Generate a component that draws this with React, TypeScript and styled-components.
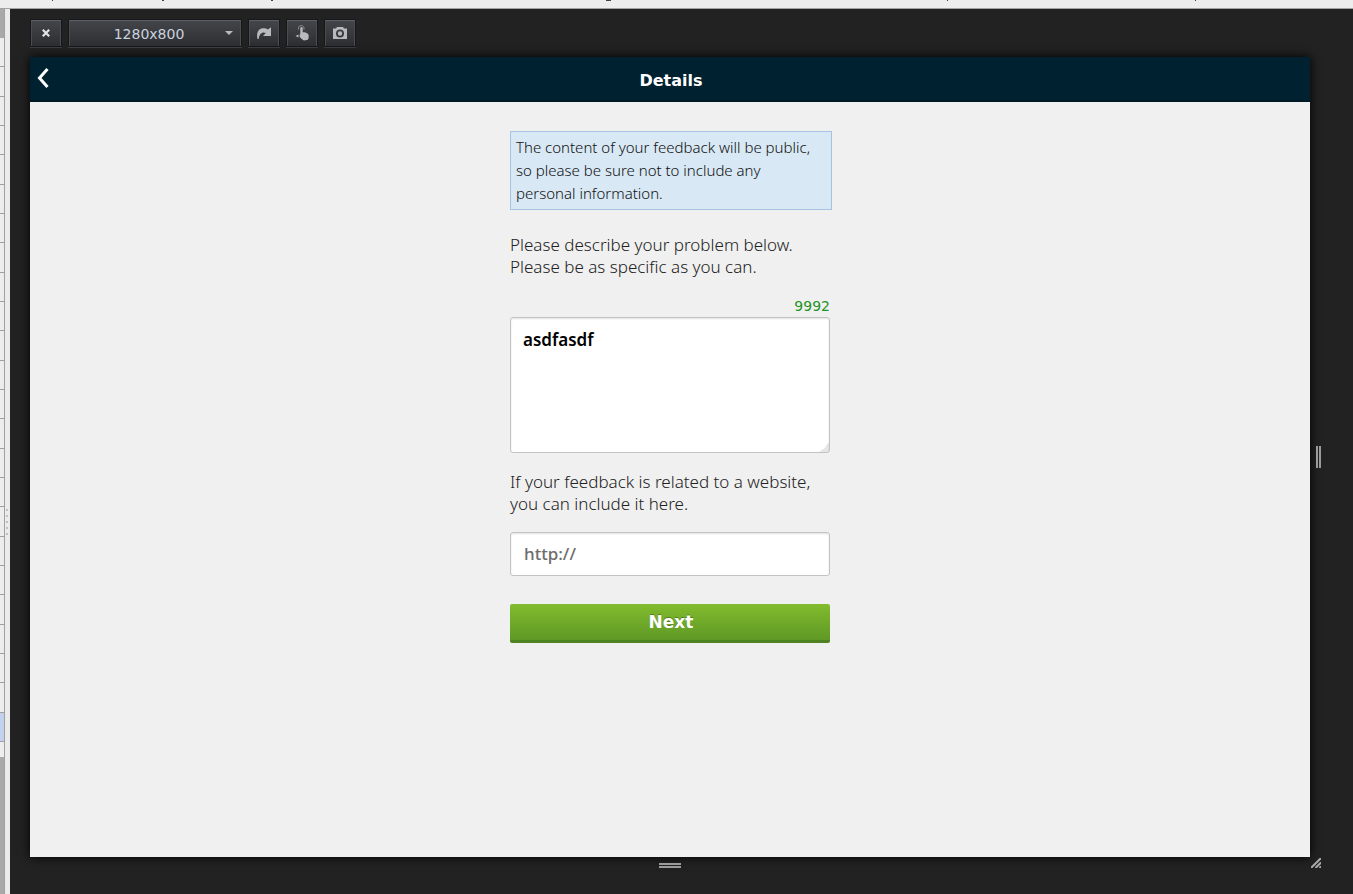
import React, { useState } from 'react';
import styled, { createGlobalStyle } from 'styled-components';

const uiFont = '"DejaVu Sans", sans-serif';
const bodyFont = '"Noto Sans", "Open Sans", sans-serif';
const LIMIT = 10000;

const GlobalStyle = createGlobalStyle`
  *, *::before, *::after { box-sizing: border-box; }
  body { margin: 0; background: #222; font-family: ${uiFont}; }
  button, input, textarea, select { font: inherit; margin: 0; }
`;

const Screen = styled.div`
  display: flex;
  flex-direction: column;
  min-height: 100vh;
`;

const BrowserEdge = styled.div`
  height: 9px;
  flex: none;
  overflow: hidden;
  background: #ededed;
  border-bottom: 1px solid #a3a3a3;
  svg { display: block; }
`;

const Workspace = styled.div`
  flex: 1;
  display: flex;
`;

const SidePanel = styled.div`
  width: 5px;
  flex: none;
  display: flex;
  flex-direction: column;
  background: #a9a9a9;
  border-right: 1px solid #a0a0a0;
  padding-top: 29px;
`;

const SideRows = styled.div`
  height: 704px;
  display: flex;
  flex-direction: column;
`;

const SideRow = styled.div<{ $selected: boolean }>`
  flex: 1;
  background: ${p => (p.$selected ? '#c2d2ee' : '#ededed')};
  border-bottom: 1px solid #a0a0a0;
`;

const SideTail = styled.div`
  height: 15px;
  background: #ededed;
`;

const Splitter = styled.div`
  width: 5px;
  flex: none;
  display: flex;
  flex-direction: column;
  align-items: flex-start;
  justify-content: center;
  gap: 4px;
  padding: 140px 0 0 1px;
  background: #ebebeb;
`;

const SplitterDot = styled.span`
  width: 2px;
  height: 2px;
  background: #c0c0c0;
`;

const Stage = styled.main`
  flex: 1;
  min-width: 0;
  display: flex;
  flex-direction: column;
  padding: 10px 0 0 20px;
  background: #222;
`;

const Toolbar = styled.div`
  display: flex;
  gap: 6px;
  padding-bottom: 10px;
`;

const ToolButton = styled.button`
  width: 32px;
  height: 28px;
  display: flex;
  align-items: center;
  justify-content: center;
  padding: 0;
  color: #b8babd;
  border: 1px solid #161719;
  border-radius: 0;
  background: linear-gradient(#44464b, #2c2e31);
  box-shadow: inset 0 1px 0 #5c5f68, inset 1px 0 0 #4b4d54, inset -1px 0 0 #4b4d54, 0 1px 0 #3c3d3f;
`;

const SizePicker = styled.label`
  position: relative;
  display: flex;
  svg {
    position: absolute;
    right: 9px;
    top: 12px;
    pointer-events: none;
  }
`;

const SizeSelect = styled.select`
  appearance: none;
  width: 174px;
  height: 28px;
  padding: 2px 12px 0 0;
  font-size: 14px;
  text-align: center;
  text-align-last: center;
  color: #c9d3df;
  border: 1px solid #161719;
  border-radius: 0;
  background: linear-gradient(#44464b, #2c2e31);
  box-shadow: inset 0 1px 0 #5c5f68, inset 1px 0 0 #4b4d54, inset -1px 0 0 #4b4d54, 0 1px 0 #3c3d3f;
`;

const StageGrid = styled.div`
  flex: 1;
  display: grid;
  grid-template-columns: minmax(0, 1fr) 43px;
  grid-template-rows: 1fr 37px;
  svg { display: block; }
`;

const Device = styled.section`
  background: #f0f0f0;
  box-shadow: 0 0 10px #000;
`;

const SideHandle = styled.div`
  display: flex;
  align-items: center;
  padding-left: 6px;
`;

const BottomHandle = styled.div`
  display: flex;
  justify-content: center;
  padding-top: 6px;
`;

const CornerHandle = styled.div`
  padding: 1px 0 0 1px;
`;

const AppHeader = styled.header`
  height: 45px;
  display: grid;
  grid-template-columns: 40px 1fr 40px;
  align-items: center;
  background: #002130;
  border-bottom: 2px solid #001926;
`;

const BackButton = styled.button`
  display: flex;
  padding: 0 0 2px 7px;
  border: 0;
  background: none;
`;

const Title = styled.h1`
  margin: 0;
  padding: 4px 0 0 2px;
  font-size: 16px;
  line-height: 20px;
  font-weight: 700;
  color: #fff;
  text-align: center;
`;

const Form = styled.form`
  width: 320px;
  margin: 29px auto 0;
  display: flex;
  flex-direction: column;
  font-family: ${bodyFont};
  font-weight: 300;
  color: #222;
`;

const Notice = styled.p`
  width: 322px;
  margin: 0 0 24px;
  padding: 4px 16px 4px 5px;
  font-size: 15px;
  line-height: 23px;
  color: #111;
  background: #d8e8f5;
  border: 1px solid #a6c3df;
`;

const Prompt = styled.label`
  font-size: 17px;
  line-height: 22px;
`;

const Counter = styled.output`
  margin: 20px 0 3px;
  font-family: ${uiFont};
  font-size: 14px;
  font-weight: 400;
  line-height: 16px;
  text-align: right;
  color: #1f9426;
`;

const Story = styled.textarea`
  display: block;
  height: 136px;
  margin-bottom: 18px;
  padding: 10px 12px;
  resize: none;
  font-weight: 600;
  font-size: 17px;
  line-height: 24px;
  color: #000;
  background:
    linear-gradient(135deg, transparent 50%, #e6e6e6 50%) right bottom / 9px 9px no-repeat,
    #fff;
  border: 1px solid #c3c3c3;
  border-radius: 3px;
  outline: none;
  box-shadow: inset 0 1px 2px rgba(0, 0, 0, 0.12);
`;

const SiteInput = styled.input`
  height: 44px;
  margin: 17px 0 28px;
  padding: 0 13px 2px;
  font-weight: 500;
  font-size: 17px;
  color: #000;
  background: #fff;
  border: 1px solid #c3c3c3;
  border-radius: 3px;
  outline: none;
  box-shadow: inset 0 1px 2px rgba(0, 0, 0, 0.12);
  &::placeholder { color: #6c6c6c; opacity: 1; }
`;

const NextButton = styled.button`
  height: 39px;
  padding: 0 0 0 2px;
  font-family: ${uiFont};
  font-size: 17px;
  font-weight: 700;
  color: #fff;
  text-shadow: 0 -1px 0 rgba(0, 0, 0, 0.3);
  background: linear-gradient(#82bc2e, #5f9825);
  border: 0;
  border-bottom: 3px solid #4f8220;
  border-radius: 2px;
`;

const rows = Array.from({ length: 24 }, (_, i) => i);
const dots = [0, 1, 2, 3, 4];

export default function App() {
  const [story, setStory] = useState('asdfasdf');
  const [site, setSite] = useState('');

  return (
    <Screen>
      <GlobalStyle />
      <BrowserEdge>
        <svg width="1353" height="2" fill="#444" aria-hidden="true">
          <path d="M52 0h1v1h-1zM162 0h2v1h-2zM271 0h2v1h-2zM606 0h5v1h-5zM947 0h1v1h-1zM1195 0h1v1h-1z" />
        </svg>
      </BrowserEdge>
      <Workspace>
        <SidePanel>
          <SideRows>
            {rows.map(i => <SideRow key={i} $selected={i === 23} />)}
          </SideRows>
          <SideTail />
        </SidePanel>
        <Splitter>{dots.map(i => <SplitterDot key={i} />)}</Splitter>
        <Stage>
          <Toolbar>
            <ToolButton type="button" aria-label="Close">
              <svg width="8" height="8" viewBox="0 0 8 8" fill="none" stroke="#e4e4e4" strokeWidth="2.2">
                <path d="M.8.8 7.2 7.2M7.2.8.8 7.2" />
              </svg>
            </ToolButton>
            <SizePicker>
              <SizeSelect aria-label="Screen size" defaultValue="1280x800">
                <option>1280x800</option>
              </SizeSelect>
              <svg width="8" height="5" viewBox="0 0 8 5"><path d="M0 0h8L4 4z" fill="#b8babd" /></svg>
            </SizePicker>
            <ToolButton type="button" aria-label="Rotate">
              <svg width="16" height="14" viewBox="0 0 16 14" fill="currentColor">
                <path d="M1.500 13C.3 7 2 2.500 7 2.200c2-.1 3.700.4 5 1.300L15 1.200V10H7l2.800-3C7 5.400 3.200 7 2.700 13z" />
              </svg>
            </ToolButton>
            <ToolButton type="button" aria-label="Simulate touch events">
              <svg width="15" height="16" viewBox="0 0 15 16" fill="currentColor">
                <path d="M5.300 9V3.200a1.200 1.200 0 0 1 2.400 0V7.200c2.400 0 5 .6 5.700 2.300.6 1.700.3 3.700-.5 5.300l-4 .8C7 14.500 4.800 12.800 4.500 10.800c0-.8.300-1.300.8-1.800zM.5 11 3.500 9.500v3z" />
                <path d="M3.500 4.600C3 2 4.300.6 6.200.6s3.300 1.400 2.800 4" fill="none" stroke="currentColor" opacity=".6" />
              </svg>
            </ToolButton>
            <ToolButton type="button" aria-label="Take screenshot">
              <svg width="14" height="12" viewBox="0 0 14 12" fill="currentColor" fillRule="evenodd">
                <path d="M4 0h6l1 1.500h3V12H0V1.500h3zM7 2.500a4 4 0 1 0 0 8 4 4 0 0 0 0-8zM7 4.300a2.200 2.200 0 1 1 0 4.400 2.200 2.200 0 0 1 0-4.400z" />
              </svg>
            </ToolButton>
          </Toolbar>
          <StageGrid>
            <Device>
              <AppHeader>
                <BackButton type="button" aria-label="Back">
                  <svg width="12" height="20" viewBox="0 0 12 20" fill="none" stroke="#fff" strokeWidth="3">
                    <path d="M10.500 1 2.500 10l8 9" />
                  </svg>
                </BackButton>
                <Title>Details</Title>
              </AppHeader>
              <Form onSubmit={e => e.preventDefault()}>
                <Notice>
                  The content of your feedback will be public, so please be sure not to include any personal information.
                </Notice>
                <Prompt htmlFor="story">
                  Please describe your problem below.<br />Please be as specific as you can.
                </Prompt>
                <Counter htmlFor="story">{LIMIT - story.length}</Counter>
                <Story id="story" spellCheck={false} value={story} onChange={e => setStory(e.target.value)} />
                <Prompt htmlFor="site">
                  If your feedback is related to a website,<br />you can include it here.
                </Prompt>
                <SiteInput id="site" placeholder="http://" value={site} onChange={e => setSite(e.target.value)} />
                <NextButton type="submit">Next</NextButton>
              </Form>
            </Device>
            <SideHandle>
              <svg width="5" height="22" fill="#9a9b9c"><path d="M0 0h2v22H0zM3 0h2v22H3z" /></svg>
            </SideHandle>
            <BottomHandle>
              <svg width="22" height="5" fill="#9a9b9c"><path d="M0 0h22v2H0zM0 3h22v2H0z" /></svg>
            </BottomHandle>
            <CornerHandle>
              <svg width="10" height="10" viewBox="0 0 10 10" stroke="#a9aaab" strokeWidth="2" fill="none">
                <path d="M0 10 10 0M4.500 10 10 4.500M8.500 10 10 8.500" />
              </svg>
            </CornerHandle>
          </StageGrid>
        </Stage>
      </Workspace>
    </Screen>
  );
}
